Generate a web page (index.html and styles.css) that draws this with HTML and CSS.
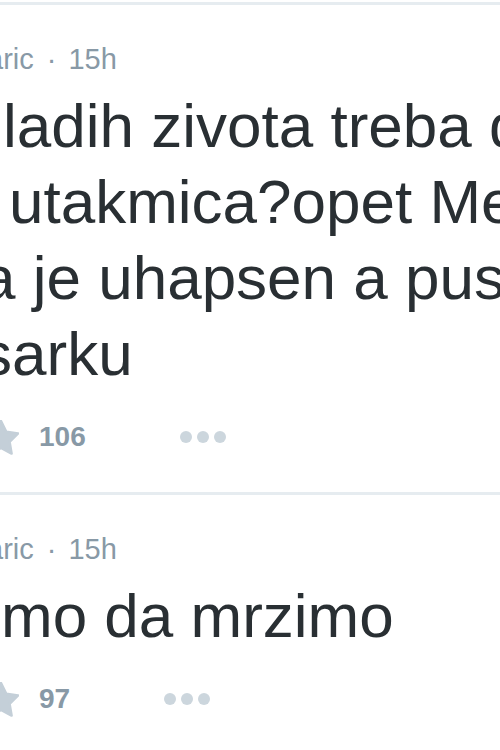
FILE: index.html
```html
<!DOCTYPE html>
<html lang="sr">
<head>
<meta charset="utf-8">
<title>Tweets</title>
<link rel="stylesheet" href="styles.css">
</head>
<body>
<div class="stream">
  <div class="tweet">
    <div class="header">aric<span class="sep">·</span>15h</div>
    <div class="text">
      <div class="line l1">ladih zivota treba da</div>
      <div class="line l2">utakmica?opet Mes</div>
      <div class="line l3">a je uhapsen a pust</div>
      <div class="line l4">sarku</div>
    </div>
    <div class="actions">
      <svg class="star" viewBox="-1 -1 36 40" width="36" height="40"><polygon points="17,0 22.29,10.72 34.12,12.44 25.56,20.78 27.58,32.56 17,27 6.42,32.56 8.44,20.78 -0.12,12.44 11.71,10.72"/></svg>
      <span class="count">106</span>
      <span class="more"><i></i><i></i><i></i></span>
    </div>
  </div>
  <div class="tweet">
    <div class="header">aric<span class="sep">·</span>15h</div>
    <div class="text">
      <div class="line l5">mo da mrzimo</div>
    </div>
    <div class="actions">
      <svg class="star" viewBox="-1 -1 36 40" width="36" height="40"><polygon points="17,0 22.29,10.72 34.12,12.44 25.56,20.78 27.58,32.56 17,27 6.42,32.56 8.44,20.78 -0.12,12.44 11.71,10.72"/></svg>
      <span class="count">97</span>
      <span class="more"><i></i><i></i><i></i></span>
    </div>
  </div>
</div>
</body>
</html>
```
FILE: styles.css
```css
html, body {
  margin: 0;
  padding: 0;
  background: #ffffff;
  overflow: hidden;
}
body {
  width: 500px;
  font-family: "Liberation Sans", Arial, sans-serif;
}
.stream {
  padding-top: 2px;
}
.tweet {
  border-top: 3px solid #e6ecf0;
  padding: 36px 0 38px 0;
  overflow: hidden;
}
.header {
  font-size: 29px;
  line-height: 36px;
  height: 36px;
  color: #8899a6;
  white-space: nowrap;
  margin-left: -13px;
}
.sep {
  padding: 0 12px 0 13px;
}
.text {
  margin-top: 11px;
  font-size: 62px;
  line-height: 76px;
  color: #292f33;
}
.line {
  white-space: nowrap;
}
.l1 { margin-left: 3px; }
.l2 { margin-left: 9px; }
.l3 { margin-left: -19px; }
.l4 { margin-left: -19px; }
.l5 { margin-left: 1px; }
.actions {
  margin-top: 28px;
  height: 34px;
  display: flex;
  align-items: center;
}
.star {
  flex: none;
  margin-left: -17px;
  margin-top: 6px;
  fill: #c4cfd8;
  stroke: #c4cfd8;
  stroke-width: 2.5;
  stroke-linejoin: round;
}
.count {
  margin-left: 20px;
  font-size: 28px;
  font-weight: bold;
  line-height: 34px;
  color: #8899a6;
}
.more {
  margin-left: 94px;
  display: flex;
  gap: 5px;
}
.more i {
  display: block;
  width: 12px;
  height: 12px;
  border-radius: 50%;
  background: #ccd6dd;
}
```
